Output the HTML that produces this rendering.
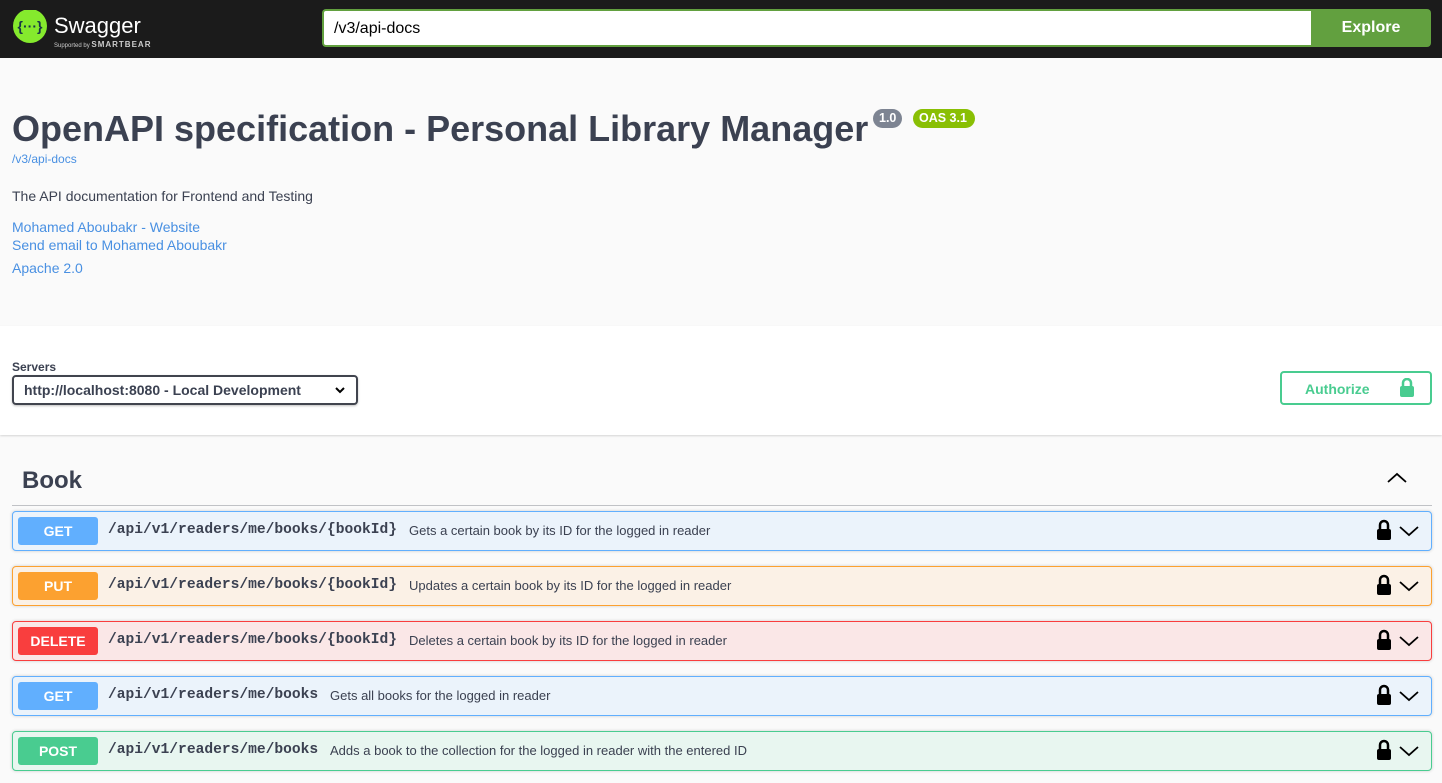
<!DOCTYPE html>
<html><head><meta charset="utf-8"><style>
*{box-sizing:border-box}
body{margin:0;width:1442px;height:783px;overflow:hidden;background:#fafafa;font-family:"Liberation Sans",sans-serif;color:#3b4151}
.top{height:58px;background:#1b1b1b;position:relative}
.logo{position:absolute;left:12px;top:10px}
.url{position:absolute;left:322px;top:9px;width:990px;height:38px;border:2px solid #62a03f;border-right:none;background:#fff;border-radius:4px 0 0 4px;font-size:16px;padding:9px 10px;color:#000}
.exp{position:absolute;left:1311px;top:9px;width:120px;height:38px;background:#62a03f;color:#fff;font-weight:bold;font-size:16px;text-align:center;line-height:38px;border-radius:0 4px 4px 0}
.info{position:relative;height:268px}
h1{position:absolute;left:12px;margin:0;font-size:36px;font-weight:bold;color:#3b4151}
.badge{position:absolute;height:19px;border-radius:57px;color:#fff;font-size:12.5px;font-weight:bold;padding:2px 6px;line-height:15px}
a{color:#4990e2;text-decoration:none}
.scheme{position:absolute;left:0;top:326px;width:1442px;height:109px;background:#fff;box-shadow:0 1px 2px rgba(0,0,0,.15)}
.sel{position:absolute;left:12px;top:49px;width:346px;height:30px;border:2px solid #41444e;border-radius:4px;font-weight:bold;font-size:14px;padding:5px 10px;box-shadow:0 1px 2px rgba(0,0,0,.25)}
.auth{position:absolute;left:1280px;top:45px;width:152px;height:34px;border:2px solid #49cc90;border-radius:4px;color:#49cc90;font-weight:bold;font-size:14px;padding:8px 0 0 23px}
.tag{position:absolute;left:12px;top:455px;width:1420px;height:51px;border-bottom:1px solid rgba(59,65,81,.3)}
.op{position:absolute;left:12px;width:1420px;height:40px;border:1px solid;border-radius:4px;box-shadow:0 0 3px rgba(0,0,0,.19)}
.m{position:absolute;left:5px;top:5px;width:80px;height:28px;border-radius:3px;color:#fff;font-weight:bold;font-size:14px;text-align:center;line-height:28px}
.p{position:absolute;left:95px;top:10px;font-family:"Liberation Mono",monospace;font-weight:bold;font-size:14.6px;color:#3b4151}
.d{position:absolute;top:11px;font-size:13px;color:#3b4151}
.ic{position:absolute;right:4px;top:6px}
</style></head><body>
<div class="top">
<div class="logo"><svg width="150" height="40"><circle cx="18" cy="16" r="17" fill="#85ea2d"/><text x="18" y="21" font-size="14" font-weight="bold" fill="#173647" text-anchor="middle" font-family="Liberation Sans">{···}</text><text x="42" y="23" font-size="22" fill="#fff" font-family="Liberation Sans">Swagger</text><text x="42" y="37" font-size="6" fill="#ccc" font-family="Liberation Sans">Supported by <tspan font-size="8" font-weight="bold" letter-spacing="1">SMARTBEAR</tspan></text></svg></div>
<div class="url">/v3/api-docs</div><div class="exp">Explore</div>
</div>
<div class="info">
<h1 style="top:50px">OpenAPI specification - Personal Library Manager</h1>
<span class="badge" style="left:873px;top:51px;background:#7d8492">1.0</span>
<span class="badge" style="left:913px;top:51px;background:#89bf04;width:62px">OAS 3.1</span>
<a style="position:absolute;left:12px;top:94px;font-size:12px">/v3/api-docs</a>
<div style="position:absolute;left:12px;top:130px;font-size:14px">The API documentation for Frontend and Testing</div>
<a style="position:absolute;left:12px;top:161px;font-size:14px">Mohamed Aboubakr - Website</a>
<a style="position:absolute;left:12px;top:179px;font-size:14px">Send email to Mohamed Aboubakr</a>
<a style="position:absolute;left:12px;top:202px;font-size:14px">Apache 2.0</a>
</div>
<div class="scheme">
<div style="position:absolute;left:12px;top:34px;font-size:12px;font-weight:bold">Servers</div>
<div class="sel">http://localhost:8080 - Local Development<svg style="position:absolute;right:10px;top:8px" width="12" height="10"><path d="M2 3l4 4 4-4" stroke="#000" stroke-width="2" fill="none"/></svg></div>
<div class="auth">Authorize<svg style="position:absolute;right:16px;top:5px" width="14" height="19"><path d="M3 9V5a4 4 0 0 1 8 0v4" stroke="#49cc90" stroke-width="2.5" fill="none"/><rect x="0" y="8" width="14" height="11" rx="2" fill="#49cc90"/></svg></div>
</div>
<div class="tag"><span style="position:absolute;left:10px;top:12px;font-size:24px;font-weight:bold">Book</span><svg style="position:absolute;right:25px;top:16px" width="20" height="14"><path d="M1 11l9-8 9 8" stroke="#000" stroke-width="1.8" fill="none"/></svg></div>

<div class="op" style="top:511px;border-color:#61affe;background:#ebf3fb"><div class="m" style="background:#61affe">GET</div><div class="p">/api/v1/readers/me/books/{bookId}</div><div class="d" style="left:396px">Gets a certain book by its ID for the logged in reader</div><svg class="ic" width="52" height="24"><path d="M5 11V7a4 4 0 0 1 8 0v4" stroke="#000" stroke-width="2.5" fill="none"/><rect x="2" y="11" width="14" height="11" rx="2"/><path d="M25 9l9 8 9-8" stroke="#000" stroke-width="1.8" fill="none"/></svg></div>
<div class="op" style="top:566px;border-color:#fca130;background:#fbf1e6"><div class="m" style="background:#fca130">PUT</div><div class="p">/api/v1/readers/me/books/{bookId}</div><div class="d" style="left:396px">Updates a certain book by its ID for the logged in reader</div><svg class="ic" width="52" height="24"><path d="M5 11V7a4 4 0 0 1 8 0v4" stroke="#000" stroke-width="2.5" fill="none"/><rect x="2" y="11" width="14" height="11" rx="2"/><path d="M25 9l9 8 9-8" stroke="#000" stroke-width="1.8" fill="none"/></svg></div>
<div class="op" style="top:621px;border-color:#f93e3e;background:#fae7e7"><div class="m" style="background:#f93e3e">DELETE</div><div class="p">/api/v1/readers/me/books/{bookId}</div><div class="d" style="left:396px">Deletes a certain book by its ID for the logged in reader</div><svg class="ic" width="52" height="24"><path d="M5 11V7a4 4 0 0 1 8 0v4" stroke="#000" stroke-width="2.5" fill="none"/><rect x="2" y="11" width="14" height="11" rx="2"/><path d="M25 9l9 8 9-8" stroke="#000" stroke-width="1.8" fill="none"/></svg></div>
<div class="op" style="top:676px;border-color:#61affe;background:#ebf3fb"><div class="m" style="background:#61affe">GET</div><div class="p">/api/v1/readers/me/books</div><div class="d" style="left:317px">Gets all books for the logged in reader</div><svg class="ic" width="52" height="24"><path d="M5 11V7a4 4 0 0 1 8 0v4" stroke="#000" stroke-width="2.5" fill="none"/><rect x="2" y="11" width="14" height="11" rx="2"/><path d="M25 9l9 8 9-8" stroke="#000" stroke-width="1.8" fill="none"/></svg></div>
<div class="op" style="top:731px;border-color:#49cc90;background:#e8f6f0"><div class="m" style="background:#49cc90">POST</div><div class="p">/api/v1/readers/me/books</div><div class="d" style="left:317px">Adds a book to the collection for the logged in reader with the entered ID</div><svg class="ic" width="52" height="24"><path d="M5 11V7a4 4 0 0 1 8 0v4" stroke="#000" stroke-width="2.5" fill="none"/><rect x="2" y="11" width="14" height="11" rx="2"/><path d="M25 9l9 8 9-8" stroke="#000" stroke-width="1.8" fill="none"/></svg></div>
</body></html>
